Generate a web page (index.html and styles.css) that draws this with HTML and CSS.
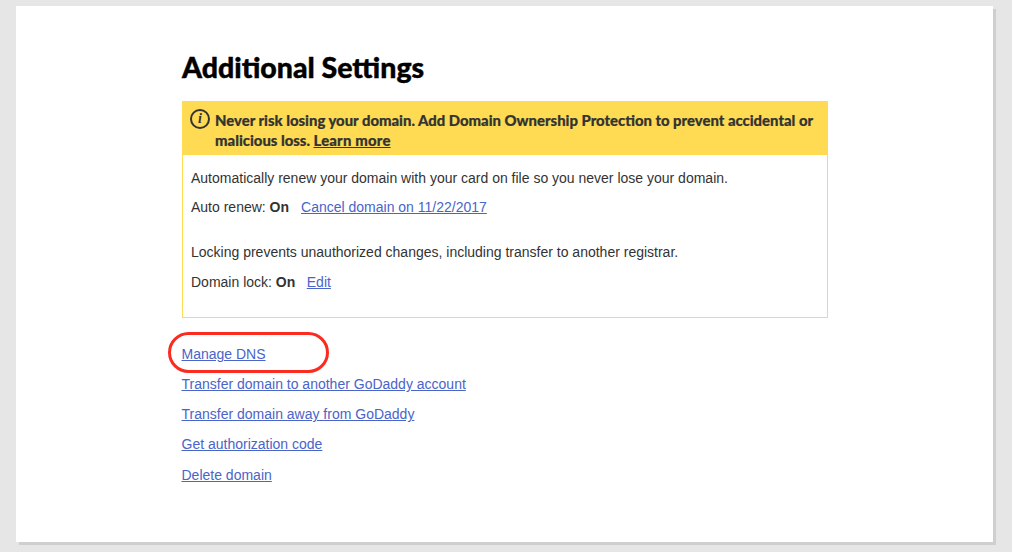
FILE: index.html
```html
<!DOCTYPE html>
<html lang="en">
<head>
<meta charset="utf-8">
<title>Additional Settings</title>
<link rel="stylesheet" href="styles.css">
</head>
<body>
<main class="sheet">
  <div class="content">
    <h1 class="title">Additional Settings</h1>
    <section class="panel">
      <div class="notice">
        <span class="notice-icon">i</span>
        <p class="notice-text">Never risk losing your domain. Add Domain Ownership Protection to prevent accidental or malicious loss. <a href="#">Learn more</a></p>
      </div>
      <div class="panel-body">
        <p class="line">Automatically renew your domain with your card on file so you never lose your domain.</p>
        <p class="line status">Auto renew: <b>On</b><a class="link action" href="#">Cancel domain on 11/22/2017</a></p>
        <p class="line lock-intro">Locking prevents unauthorized changes, including transfer to another registrar.</p>
        <p class="line status">Domain lock: <b>On</b><a class="link action lock-edit" href="#">Edit</a></p>
      </div>
    </section>
    <nav class="links">
      <a class="link" href="#">Manage DNS</a>
      <a class="link" href="#">Transfer domain to another GoDaddy account</a>
      <a class="link" href="#">Transfer domain away from GoDaddy</a>
      <a class="link" href="#">Get authorization code</a>
      <a class="link" href="#">Delete domain</a>
    </nav>
  </div>
  <div class="highlight"></div>
</main>
</body>
</html>
```
FILE: styles.css
```css
* { box-sizing: border-box; }
html, body { margin: 0; height: 100%; }
body {
  background: #e6e6e6;
  padding: 6px 19px 0 16px;
  font-family: "Liberation Sans", Arial, sans-serif;
  overflow: hidden;
}
.sheet {
  position: relative;
  width: 977px;
  height: 536px;
  background: #fff;
  box-shadow: 3px 3px 0 #cfcfcf;
  padding: 45px 0 0 166px;
}
.content { width: 646px; }
.title {
  margin: 0 0 18px;
  font-family: Lato, sans-serif;
  font-weight: 900;
  font-size: 28.5px;
  line-height: 32px;
  color: #000;
  -webkit-text-stroke: 0.4px #000;
}
.panel { border: 1px solid #fedb52; border-top: 0; height: 217px; }
.notice {
  display: flex;
  gap: 5px;
  margin: 0 -1px;
  height: 54px;
  padding: 9px 8px 0;
  background: #fedb52;
}
.notice-icon {
  flex: none;
  width: 20px;
  height: 20px;
  margin-top: -1px;
  border: 2px solid #333;
  border-radius: 50%;
  font: italic 700 14px/16px "Liberation Serif", serif;
  color: #333;
  text-align: center;
}
.notice-text {
  margin: 0;
  font-family: Lato, sans-serif;
  font-weight: 900;
  font-size: 14.87px;
  line-height: 20px;
  color: #333;
  -webkit-text-stroke: 0.2px #333;
}
.notice-text a { color: inherit; letter-spacing: 0.2px; }
.panel-body { padding: 14px 8px 0; }
.line {
  margin: 0 0 11px;
  font-size: 14px;
  line-height: 18px;
  color: #333;
}
.lock-intro { margin-top: 27px; margin-bottom: 12px; }
.link { color: #4a64c8; }
.action { margin-left: 12px; }
.lock-edit { margin-left: 11.5px; }
.links {
  display: flex;
  flex-direction: column;
  align-items: flex-start;
  gap: 12.15px;
  margin: 27px 0 0 -0.5px;
  font-size: 14px;
  line-height: 18px;
}
.highlight {
  position: absolute;
  left: 152px;
  top: 326px;
  width: 161px;
  height: 41px;
  border: 3px solid #fb2c1f;
  border-radius: 21px;
}
```
